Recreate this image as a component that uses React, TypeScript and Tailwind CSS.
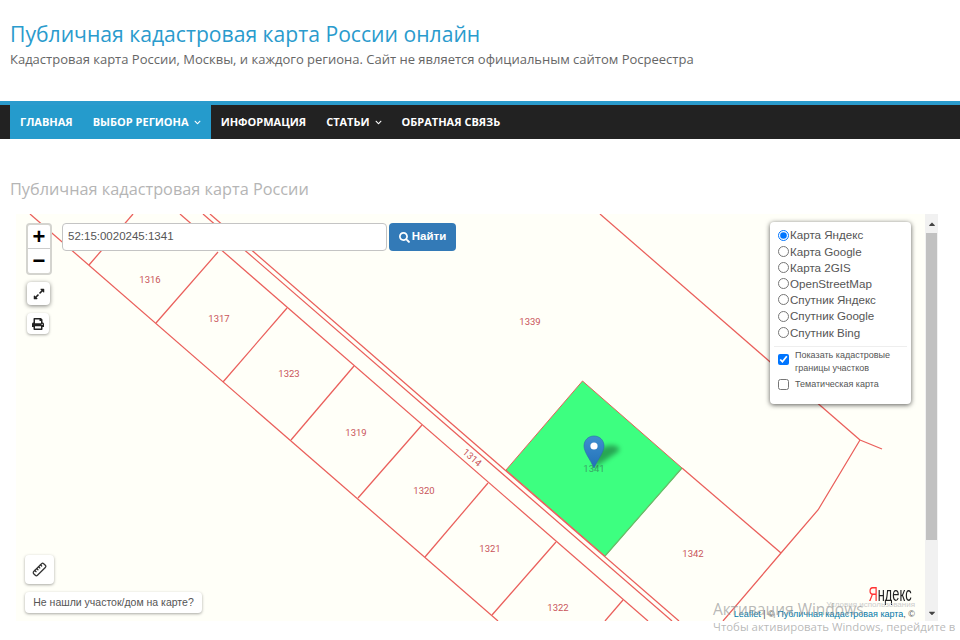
import { FaSearch, FaPrint, FaExpandAlt, FaChevronDown, FaCaretUp, FaCaretDown } from "react-icons/fa";
import { Ruler } from "lucide-react";

const lines: [number, number, number, number][] = [
  [30, 214, 498, 621],
  [180, 214, 648, 621],
  [203, 214, 672, 621],
  [210, 214, 679, 621],
  [133, 214, 89, 265],
  [218, 252, 156, 323],
  [287, 308, 223, 382],
  [354, 366, 291, 440],
  [422, 425, 358, 498],
  [488, 483, 425, 557],
  [556, 542, 492, 615],
  [623, 600, 605, 621],
  [600, 214, 860, 440],
  [860, 440, 882, 449],
  [682, 468, 781, 553],
];

const labels: [string, number, number][] = [
  ["1316", 150, 283],
  ["1317", 219, 322],
  ["1323", 289, 377],
  ["1319", 356, 436],
  ["1320", 424, 494],
  ["1321", 490, 552],
  ["1322", 558, 611],
  ["1339", 530, 325],
  ["1342", 693, 557],
];

const bases = ["Карта Яндекс", "Карта Google", "Карта 2GIS", "OpenStreetMap", "Спутник Яндекс", "Спутник Google", "Спутник Bing"];

function MapDrawing() {
  return (
    <svg className="absolute inset-0 w-full h-full" viewBox="16 214 909 407">
      <defs>
        <linearGradient id="pin" x1="0" y1="0" x2="0" y2="1">
          <stop offset="0" stopColor="#3f8fcf" />
          <stop offset="1" stopColor="#2270b8" />
        </linearGradient>
        <filter id="blur" x="-50%" y="-50%" width="200%" height="200%">
          <feGaussianBlur stdDeviation="2.5" />
        </filter>
      </defs>
      <polygon points="582.5,381 682,468 605,556 506,470" fill="#3dff80" stroke="#e5605a" strokeWidth="1" />
      <polyline points="682,468 605,556" fill="none" stroke="#5fc46a" strokeWidth="1.2" />
      {lines.map(([a, b, c, d], i) => (
        <line key={i} x1={a} y1={b} x2={c} y2={d} stroke="#ea5f5b" strokeWidth="1.25" />
      ))}
      <polyline points="860,440 818,510 781,553 723,621" fill="none" stroke="#ea5f5b" strokeWidth="1.25" />
      <g fontFamily="Roboto, 'Liberation Sans', sans-serif" fontSize="9.5" fill="#c9555a" textAnchor="middle">
        {labels.map(([t, x, y]) => (
          <text key={t} x={x} y={y}>{t}</text>
        ))}
        <text x="0" y="0" transform="translate(470 460) rotate(41)">1314</text>
        <text x="594" y="472" fill="#3aa867">1341</text>
      </g>
      <path d="M594 468 L619 451 C621 446 612 444 606 446 L597 450 Z" fill="#000" opacity="0.35" filter="url(#blur)" />
      <path d="M594 468 C590 459 584 452 584 446 C584 440 588.500 436 594 436 C599.500 436 604 440 604 446 C604 452 598 459 594 468 Z" fill="url(#pin)" stroke="#2a6ca8" strokeWidth="0.6" />
      <circle cx="594" cy="446" r="3.6" fill="#fff" />
    </svg>
  );
}

export default function App() {
  return (
    <div className="relative h-[640px] w-[960px] overflow-hidden bg-white font-['Open_Sans',sans-serif]">
      <header className="px-2.5 pt-[18px] h-[101px]">
        <h1 className="text-[21.150px] leading-[32px] text-[#2a9bcd]">Публичная кадастровая карта России онлайн</h1>
        <p className="text-[13px] leading-[18px] text-[#666]">Кадастровая карта России, Москвы, и каждого региона. Сайт не является официальным сайтом Росреестра</p>
      </header>

      <nav className="border-t-[4px] border-[#2a9bcd] bg-[#222222] h-[38px] pl-2.5 flex text-[11px] font-bold uppercase text-white">
        <div className="flex bg-[#259bcc]">
          <a className="flex items-center px-2.5">Главная</a>
          <a className="flex items-center px-2.5 gap-[5px]">Выбор региона <FaChevronDown className="text-[7px]" /></a>
        </div>
        <a className="flex items-center px-2.5">Информация</a>
        <a className="flex items-center px-2.5 gap-[5px]">Статьи <FaChevronDown className="text-[7px]" /></a>
        <a className="flex items-center px-2.5">Обратная связь</a>
      </nav>

      <h2 className="pl-2.5 mt-[38px] text-[16.300px] leading-[24px] text-[#b5b5b5]">Публичная кадастровая карта России</h2>

      <div className="ml-4 mt-[13px] flex w-[922px] h-[407px] font-['Liberation_Sans',sans-serif]">
        <div className="relative flex-1 bg-[#fffff8] overflow-hidden">
          <MapDrawing />

          <div className="absolute left-[10px] top-[9px] flex flex-col items-start">
            <div className="w-[26px] rounded border-2 border-[#d4d4cf] bg-white text-black overflow-hidden">
              <div className="h-[24px] flex items-center justify-center text-[22px] font-bold leading-none border-b border-[#ccc]">+</div>
              <div className="h-[24px] flex items-center justify-center text-[22px] font-bold leading-none">−</div>
            </div>
            <div className="mt-[7px] ml-px w-[23px] h-[23px] bg-white rounded flex items-center justify-center shadow-[0_1px_4px_rgba(0,0,0,0.5)] text-[#222]">
              <FaExpandAlt className="text-[12px]" />
            </div>
            <div className="mt-[8px] ml-px w-[22px] h-[21px] bg-white rounded flex items-center justify-center shadow-[0_1px_3px_rgba(0,0,0,0.35)] text-[#222]">
              <FaPrint className="text-[12px]" />
            </div>
          </div>

          <div className="absolute left-[46px] top-[9px] flex gap-[2px]">
            <div className="w-[325px] h-[28px] rounded border border-[#c4c4c4] bg-white px-[5px] flex items-center text-[11.500px] text-[#555]">52:15:0020245:1341</div>
            <div className="w-[67px] h-[28px] rounded bg-[#337ab7] text-white text-[11.500px] font-bold flex items-center justify-center gap-[2px]">
              <FaSearch className="text-[11px]" /> Найти
            </div>
          </div>

          <div className="absolute left-[754px] top-[8px] w-[141px] h-[182px] bg-white rounded shadow-[0_1px_5px_rgba(0,0,0,0.65)] px-1 pt-[5px]">
            <div className="flex flex-col">
              {bases.map((b, i) => (
                <label key={b} className="flex items-center h-[16.2px] text-[11.600px] text-[#555] pl-[4px]">
                  <input type="radio" name="base" defaultChecked={i === 0} className="w-[11px] h-[11px] m-0 mr-px" />
                  {b}
                </label>
              ))}
            </div>
            <div className="border-t border-[#eee] mt-[6px] pt-[2px] text-[9px] leading-[13px] text-[#555] pl-[4px]">
              <label className="flex items-start">
                <input type="checkbox" defaultChecked className="w-[11px] h-[11px] m-0 mt-[5px]" />
                <span className="ml-[6px]">Показать кадастровые<br />границы участков</span>
              </label>
              <label className="flex items-center mt-[3px]">
                <input type="checkbox" className="w-[11px] h-[11px] m-0" />
                <span className="ml-[6px]">Тематическая карта</span>
              </label>
            </div>
          </div>

          <div className="absolute left-[9px] bottom-[8px] flex flex-col items-start gap-[8px]">
            <div className="w-[29px] h-[29px] rounded bg-white flex items-center justify-center shadow-[0_1px_3px_rgba(0,0,0,0.35)]">
              <Ruler size={15} className="text-[#333] -scale-x-100" />
            </div>
            <div className="w-[177px] h-[21px] rounded bg-white flex items-center justify-center text-[10.500px] text-[#555] shadow-[0_1px_3px_rgba(0,0,0,0.35)]">Не нашли участок/дом на карте?</div>
          </div>

          <div className="absolute right-[13px] bottom-[17px] text-[21px] leading-none text-[#222] origin-right scale-x-[0.61] whitespace-nowrap">
            <span className="text-[#f33]">Я</span>ндекс
          </div>
          <div className="absolute right-[10px] bottom-[11px] text-[8px] leading-[10px] text-[#ccc] whitespace-nowrap">Условия использования</div>
          <div className="absolute right-[10px] bottom-px text-[9px] leading-[12px] text-[#555] whitespace-nowrap">
            <span className="text-[#0078a8]">Leaflet</span> | © <span className="text-[#0078a8]">Публичная кадастровая карта</span>, ©
          </div>
        </div>

        <div className="relative w-[13px] bg-[#f1f1f1] flex flex-col px-px">
          <div className="h-[19px] flex items-center justify-center text-[#444] text-[10px]"><FaCaretUp /></div>
          <div className="h-[307px] bg-[#c1c1c1]" />
          <div className="flex-1" />
          <div className="h-[17px] flex items-center justify-center text-[#444] text-[10px]"><FaCaretDown /></div>
        </div>
      </div>

      <div className="absolute left-[713px] top-[599px] w-[247px] text-[#9a9a9a]/70 font-['Open_Sans',sans-serif] whitespace-nowrap">
        <div className="text-[15.500px] leading-[20px]">Активация Windows</div>
        <div className="text-[11.400px] leading-[17px] mt-[-1px]">Чтобы активировать Windows, перейдите в</div>
        <div className="text-[11.400px] leading-[17px] mt-[2px] pl-[42px]">"Параметры".</div>
      </div>
    </div>
  );
}
